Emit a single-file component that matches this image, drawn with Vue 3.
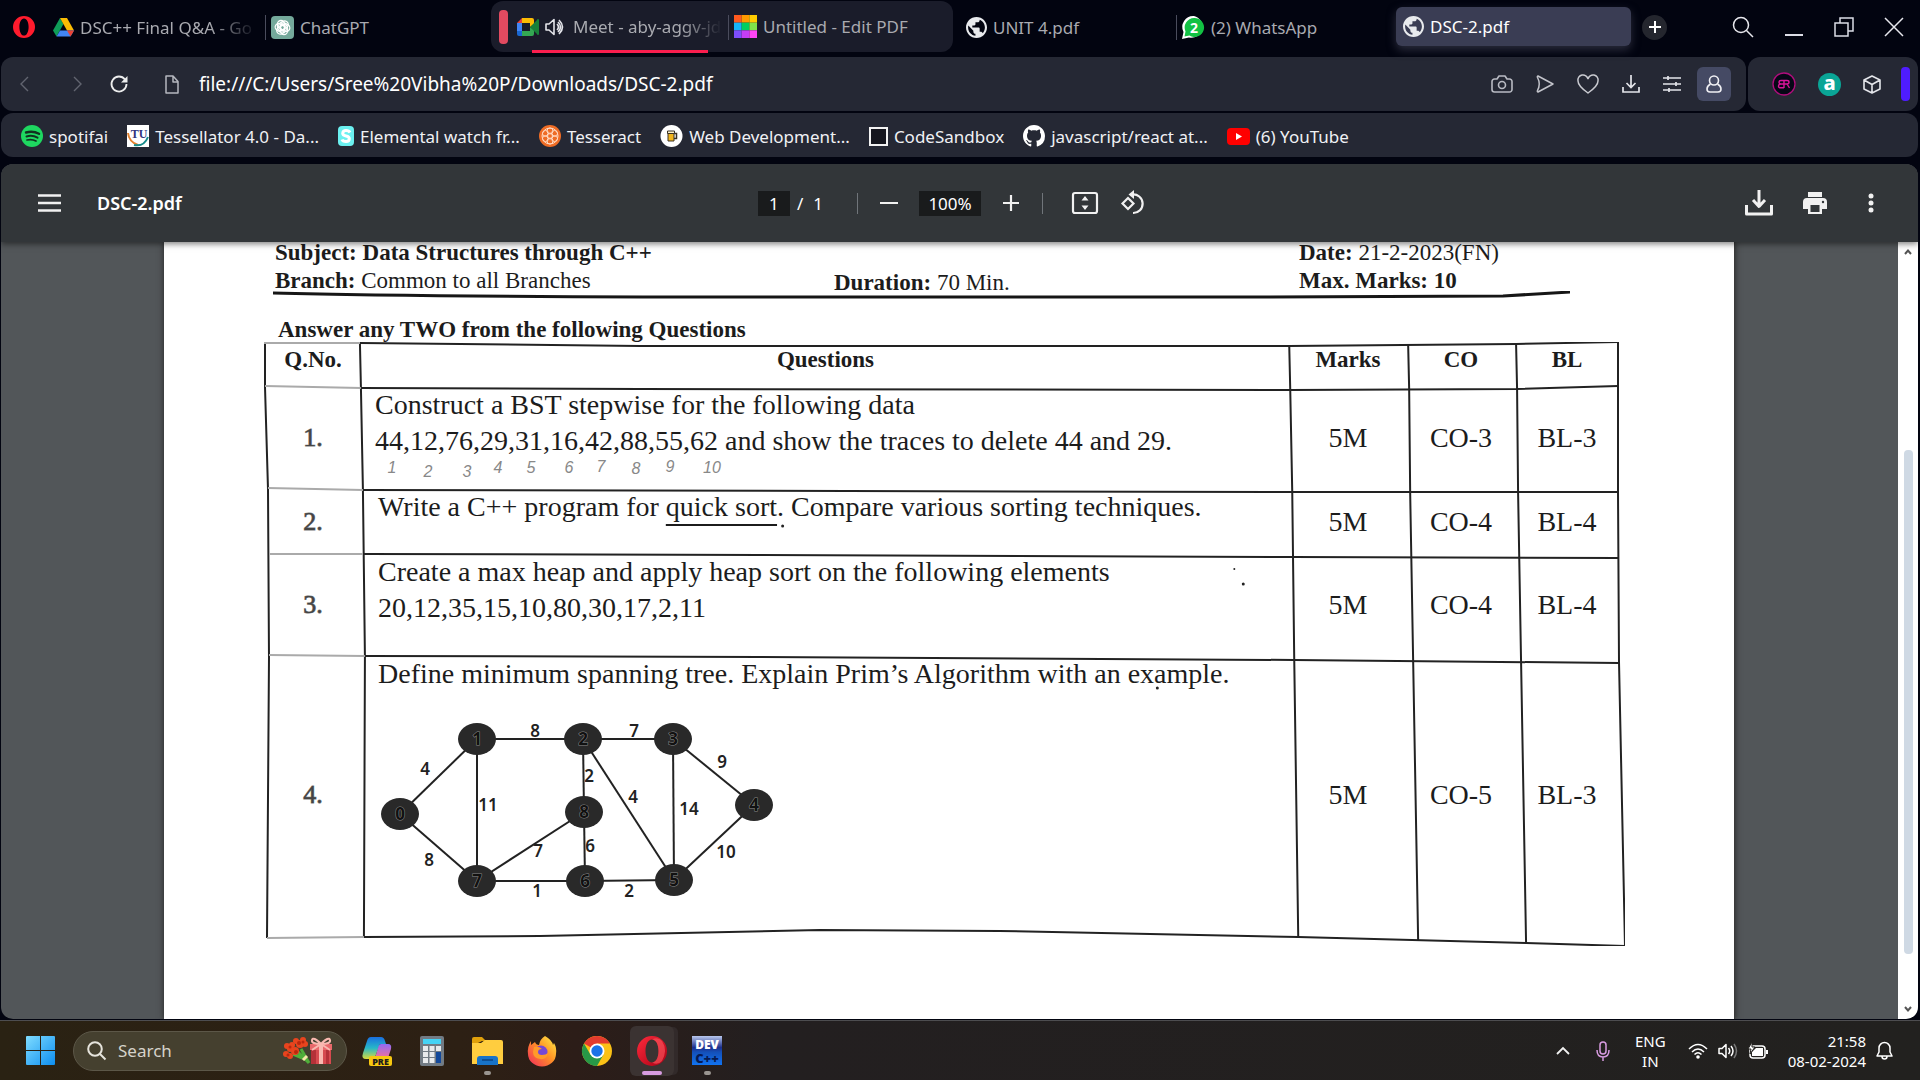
<script setup>
import { h, ref } from 'vue'

const icons = {
  opera: [22, 22, '0 0 22 22', '<path fill="#ff1b2d" fill-rule="evenodd" d="M11 0a11 11 0 1 0 0 22a11 11 0 0 0 0-22zM11 2.400c2.800 0 4.600 3.800 4.600 8.600s-1.800 8.600-4.600 8.600s-4.600-3.800-4.600-8.600s1.800-8.600 4.600-8.600z"/>'],
  drive: [21, 19, '0 0 21 19', '<path fill="#0f9d58" d="M7 0L0 12.500l3.500 6L10.500 6z"/><path fill="#fbbc04" d="M7 0h7l7 12.500h-7z"/><path fill="#4285f4" d="M3.500 18.500L7 12.500h14l-3.500 6z"/><path fill="#ea4335" d="M17.500 18.500l3.500-6h-7z"/>'],
  chatgpt: [23, 23, '0 0 23 23', '<rect width="23" height="23" rx="4" fill="#74a99b"/><g fill="none" stroke="#fff" stroke-width="1.300" transform="translate(11.500 11.500)"><rect x="-5" y="-7" width="7" height="10" rx="3.500"/><rect x="-5" y="-7" width="7" height="10" rx="3.500" transform="rotate(60)"/><rect x="-5" y="-7" width="7" height="10" rx="3.500" transform="rotate(120)"/><rect x="-5" y="-7" width="7" height="10" rx="3.500" transform="rotate(180)"/><rect x="-5" y="-7" width="7" height="10" rx="3.500" transform="rotate(240)"/><rect x="-5" y="-7" width="7" height="10" rx="3.500" transform="rotate(300)"/></g>'],
  meet: [22, 18, '0 0 22 18', '<path fill="#ea4335" d="M0 5L5 0v5z"/><path fill="#fbbc04" d="M5 0h10a2 2 0 0 1 2 2v4l-4 3V5H5z"/><path fill="#4285f4" d="M0 5h5v8H0z"/><path fill="#1967d2" d="M0 13h5v5H2a2 2 0 0 1-2-2z"/><path fill="#34a853" d="M5 13h8V9l4 3v4a2 2 0 0 1-2 2H5z"/><path fill="#188038" d="M13 9l7-7a1 1 0 0 1 2 0v14a1 1 0 0 1-2 0z"/>'],
  sound: [22, 18, '0 0 22 18', '<g fill="none" stroke="#e4e5ea" stroke-width="1.600"><path d="M1 6h3l5-4.500v15L4 12H1z" stroke-linejoin="round"/><path d="M12 6q3 3 0 6M14 2q7 7 0 14M13 4q5 5 0 10"/></g>'],
  rainbow: [23, 23, '0 0 24 24', '<path fill="#ff5a1f" d="M0 0h8v8H0z"/><path fill="#ff9a00" d="M8 0h8v8H8z"/><path fill="#ffcc00" d="M16 0h8v8h-8z"/><path fill="#16b5fb" d="M0 8h8v8H0z"/><path fill="#00cf60" d="M8 8h8v8H8z"/><path fill="#7fe24a" d="M16 8h8v8h-8z"/><path fill="#7d4dfb" d="M0 16h8v8H0z"/><path fill="#c53df5" d="M8 16h8v8H8z"/><path fill="#ff45f5" d="M16 16h8v8h-8z"/>'],
  globe: [21, 21, '2 2 20 20', '<path fill="#e8eaed" d="M12 2C6.480 2 2 6.480 2 12s4.480 10 10 10 10-4.480 10-10S17.520 2 12 2zm-1 17.930c-3.950-.49-7-3.850-7-7.930 0-.62.08-1.210.21-1.790L9 15v1c0 1.100.9 2 2 2v1.930zm6.900-2.540c-.26-.81-1-1.390-1.900-1.390h-1v-3c0-.55-.45-1-1-1H8v-2h2c.55 0 1-.45 1-1V7h2c1.100 0 2-.9 2-2v-.41c2.930 1.190 5 4.060 5 7.410 0 2.080-.8 3.970-2.100 5.390z"/>'],
  whatsapp: [23, 23, '0 0 23 23', '<path fill="#fff" d="M12 0A11 11 0 1 1 7 21.500L0 23l1.500-7A11 11 0 0 1 12 0z"/><path fill="#12c143" d="M12 2A9.500 9.500 0 1 1 7.500 19.500L2.500 20.500l1-5A9.500 9.500 0 0 1 12 2z"/><text x="12" y="17" text-anchor="middle" font-family="Open Sans, sans-serif" font-size="14" font-weight="700" fill="#fff">2</text>'],
  plus: [12, 12, '0 0 12 12', '<path stroke="#fff" stroke-width="2" d="M6 0v12M0 6h12"/>'],
  search: [22, 22, '0 0 22 22', '<g fill="none" stroke="#e8e8ee" stroke-width="1.500"><circle cx="9" cy="9" r="7.500"/><path d="M14.500 14.500L21 21"/></g>'],
  minimize: [20, 20, '0 0 20 20', '<path stroke="#dcdde6" stroke-width="2" d="M1 18h18"/>'],
  restore: [20, 20, '0 0 20 20', '<g fill="none" stroke="#dcdde6" stroke-width="1.500"><path d="M1 6h13v13H1zM6 6V1h13v13h-5"/></g>'],
  close: [20, 20, '0 0 20 20', '<path stroke="#e8e8ee" stroke-width="1.500" d="M1 1l18 18M19 1L1 19"/>'],
  back: [10, 14, '0 0 10 14', '<path fill="none" stroke="#626570" stroke-width="1.400" d="M8 0L1 7l7 7"/>'],
  forward: [10, 14, '0 0 10 14', '<path fill="none" stroke="#626570" stroke-width="1.400" d="M2 0l7 7-7 7"/>'],
  reload: [18, 18, '0 0 18 18', '<path fill="none" stroke="#eceded" stroke-width="1.800" d="M15 4.500A7.500 7.500 0 1 0 16.500 9"/><path fill="#eceded" d="M17.500 1v6.500H11z"/>'],
  doc: [16, 19, '0 0 16 19', '<path fill="none" stroke="#b5b7be" stroke-width="1.500" stroke-linejoin="round" d="M2 1h7l5 5.500V18H2zM9 1v6h5"/>'],
  camera: [22, 18, '0 0 22 18', '<g fill="none" stroke="#b9bbc3" stroke-width="1.600"><path stroke-linejoin="round" d="M3.500 4H6l2-3h6l2 3h2.500A2.500 2.500 0 0 1 21 6.500v8a2.500 2.500 0 0 1-2.500 2.500h-15A2.500 2.500 0 0 1 1 14.500v-8A2.500 2.500 0 0 1 3.500 4z"/><circle cx="11" cy="10" r="3.500"/></g>'],
  send: [18, 18, '0 0 18 18', '<path fill="none" stroke="#c3c4cb" stroke-width="1.500" stroke-linejoin="round" d="M2 1l15 8-15 8q-1 0-.500-1.500Q5 9 1.500 2.500Q1 1 2 1z"/>'],
  heart: [22, 19, '0 0 22 19', '<path fill="none" stroke="#c9cad0" stroke-width="1.500" d="M11 18Q1 11 1 6a5 5 0 0 1 10-2a5 5 0 0 1 10 2q0 5-10 12z"/>'],
  download: [18, 18, '0 0 18 18', '<path fill="none" stroke="#e4e5ea" stroke-width="1.700" d="M9 0v12M4.500 8L9 12.500 13.500 8M1 12v5h16v-5"/>'],
  sliders: [18, 16, '0 0 18 16', '<path stroke="#e4e5ea" stroke-width="1.700" d="M0 2h18M0 8h18M0 14h18M5 0v4M13 6v4M6 12v4"/>'],
  profile: [16, 18, '0 0 16 18', '<g fill="none" stroke="#f0f0f4" stroke-width="1.600"><circle cx="8" cy="5.500" r="4.500"/><path d="M4.500 9Q1 11 1 14q0 3 3 3h8q3 0 3-3q0-3-3.500-5"/></g>'],
  br: [24, 24, '0 0 24 24', '<circle cx="12" cy="12" r="11" fill="#060816" stroke="#b00d7c" stroke-width="1.300"/><path fill="none" stroke="#d9159a" stroke-width="1.400" d="M12 8v8M12 8.500H9q-2 0-2 1.700t2 1.800h3M9 12q-2.500 0-2.500 2T9 15.800h3M12 8.500h3q2 0 2 1.700T15 12h-3M15 12l2.500 4"/>'],
  alexa: [23, 23, '0 0 23 23', '<circle cx="11.500" cy="11.500" r="11.500" fill="#0aa596"/><text x="11.500" y="17" text-anchor="middle" font-family="Noto Sans, sans-serif" font-size="20" font-weight="800" fill="#fff">a</text>'],
  cube: [18, 19, '0 0 18 19', '<path fill="none" stroke="#e4e5ea" stroke-width="1.600" stroke-linejoin="round" d="M9 1l8 4v9l-8 4-8-4V5zM1 5l8 4.500L17 5M9 9.500V18"/>'],
  spotify: [22, 22, '0 0 22 22', '<circle cx="11" cy="11" r="11" fill="#1ed760"/><g fill="none" stroke="#123020" stroke-linecap="round"><path stroke-width="2.400" d="M5 7.500q7-2 13 1.300"/><path stroke-width="2" d="M5.500 11.500q6-1.700 11 1.200"/><path stroke-width="1.700" d="M6 15q5-1.200 9 1"/></g>'],
  tu: [22, 22, '0 0 22 22', '<path fill="#fff" d="M0 0h22v22H0z"/><path fill="none" stroke="#e2812f" stroke-width="2" d="M1 8q1 9 10 12"/><path fill="none" stroke="#158a8a" stroke-width="2" d="M7 20q10 2 14-8"/><text x="12" y="13" text-anchor="middle" font-family="Liberation Serif, serif" font-size="12" font-weight="700" fill="#31357e">TU</text>'],
  s: [16, 20, '0 0 16 20', '<rect width="16" height="20" rx="4" fill="#6bf0f0"/><path fill="none" stroke="#fff" stroke-width="3" d="M12 6.500q-1-2-4-2t-3.300 2.800q0 2 3.300 2.700t3.300 2.800q0 2.700-3.300 2.700t-4-2"/>'],
  tesseract: [22, 22, '0 0 22 22', '<circle cx="11" cy="11" r="11" fill="#ef6c25"/><g fill="none" stroke="#ffd9c0" stroke-width="1"><circle cx="11" cy="11" r="8"/><circle cx="11" cy="11" r="3"/><circle cx="11" cy="6" r="3"/><circle cx="11" cy="16" r="3"/><circle cx="6.500" cy="8.500" r="3"/><circle cx="15.500" cy="8.500" r="3"/><circle cx="6.500" cy="13.500" r="3"/><circle cx="15.500" cy="13.500" r="3"/></g>'],
  beer: [23, 22, '0 0 23 22', '<circle cx="11.500" cy="11" r="11" fill="#fff"/><path fill="none" stroke="#3a3226" stroke-width="1.500" d="M14 8.500h2.500v5H14"/><path fill="#f2b51d" stroke="#3a3226" d="M8 8h6v8H8z"/><path fill="#fff3c9" stroke="#3a3226" d="M7.500 6h7v2.500h-7z"/>'],
  sandbox: [19, 19, '0 0 19 19', '<path fill="#15161e" stroke="#f2f2f2" stroke-width="2" d="M1 1h17v17H1z"/>'],
  github: [22, 22, '0 0 16 16', '<path fill="#fff" d="M8 0C3.580 0 0 3.580 0 8c0 3.540 2.290 6.530 5.470 7.590.4.070.55-.17.55-.38 0-.19-.01-.82-.01-1.490-2.010.37-2.530-.49-2.690-.94-.09-.23-.48-.94-.82-1.130-.28-.15-.68-.52-.01-.53.63-.01 1.080.58 1.230.82.72 1.210 1.870.87 2.330.66.07-.52.28-.87.51-1.070-1.780-.2-3.640-.89-3.640-3.950 0-.87.31-1.590.82-2.150-.08-.2-.36-1.020.08-2.120 0 0 .67-.21 2.200.82.64-.18 1.320-.27 2-.27s1.360.09 2 .27c1.530-1.040 2.200-.82 2.200-.82.44 1.100.16 1.920.08 2.120.51.56.82 1.270.82 2.150 0 3.070-1.870 3.750-3.650 3.950.29.25.54.73.54 1.480 0 1.070-.01 1.930-.01 2.200 0 .21.15.46.55.38A8.010 8.010 0 0 0 16 8c0-4.420-3.580-8-8-8z"/>'],
  youtube: [23, 17, '0 0 23 17', '<rect width="23" height="17" rx="4" fill="#f00"/><path fill="#fff" d="M9 5l6 3.500L9 12z"/>'],
  menu: [23, 18, '0 0 23 18', '<path stroke="#f1f1f1" stroke-width="2.500" d="M0 1.500h23M0 9h23M0 16.500h23"/>'],
  zoomOut: [18, 18, '0 0 18 18', '<path stroke="#f1f1f1" stroke-width="2.200" d="M0 9h18"/>'],
  zoomIn: [18, 18, '0 0 18 18', '<path stroke="#f1f1f1" stroke-width="2.200" d="M1 9h16M9 1v16"/>'],
  fit: [26, 22, '0 0 26 22', '<rect x="1" y="1" width="24" height="20" rx="2" fill="none" stroke="#f1f1f1" stroke-width="2.200"/><path fill="#f1f1f1" d="M13 4l3.500 4.500h-7zM13 18l3.500-4.500h-7z"/>'],
  rotate: [26, 26, '0 0 26 26', '<g fill="none" stroke="#f1f1f1" stroke-width="2.200"><path d="M8 8l5.500 5.500L8 19l-5.500-5.500z"/><path d="M12 4.500a9.300 9.300 0 1 1 1 18.500"/></g><path fill="#f1f1f1" d="M14 0v9L8.500 4.500z"/>'],
  save: [28, 26, '0 0 28 26', '<path fill="none" stroke="#f1f1f1" stroke-width="3" stroke-linejoin="round" d="M14 0v16M8 10l6 6.500 6-6.500M1.500 15v9h25v-9"/>'],
  print: [24, 22, '0 0 24 22', '<path fill="#f1f1f1" d="M5 0h14v5H5zM4 6h16q4 0 4 4v7h-5v5H5v-5H0v-7q0-4 4-4z"/><path fill="#323639" d="M7.500 13h9v7h-9z"/><circle cx="20" cy="10" r="1.200" fill="#323639"/>'],
  dots: [6, 20, '0 0 6 20', '<g fill="#f1f1f1"><circle cx="3" cy="3" r="2.500"/><circle cx="3" cy="10" r="2.500"/><circle cx="3" cy="17" r="2.500"/></g>'],
  scrollUp: [8, 6, '0 0 8 6', '<path fill="none" stroke="#555" stroke-width="2" d="M1 5l3-3.500L7 5"/>'],
  scrollDown: [8, 6, '0 0 8 6', '<path fill="none" stroke="#555" stroke-width="2" d="M1 1l3 3.500L7 1"/>'],
  windows: [29, 29, '0 0 29 29', '<defs><linearGradient id="win" x1="0" y1="0" x2="1" y2="1"><stop offset="0" stop-color="#7fdcff"/><stop offset="1" stop-color="#0d8ef0"/></linearGradient></defs><path fill="url(#win)" d="M1 0h13v14H0V1a1 1 0 0 1 1-1zM15 0h13a1 1 0 0 1 1 1v13H15zM0 15h14v14H1a1 1 0 0 1-1-1zM15 15h14v13a1 1 0 0 1-1 1H15z"/>'],
  lens: [19, 19, '0 0 19 19', '<g fill="none" stroke="#e6e4dd" stroke-width="2"><circle cx="8" cy="8" r="6.800"/><path d="M13 13l5.500 5.500"/></g>'],
  gift: [50, 28, '0 0 50 28', '<g stroke="#4fae3a" stroke-width="3"><path d="M15 15l11 11M10 17l14 6M18 12l8 14"/></g><path stroke="#f4e9a8" stroke-width="3" d="M20 23l4-4"/><g fill="#e8441e"><circle cx="4" cy="9" r="3"/><circle cx="7" cy="12" r="3"/><circle cx="9" cy="8" r="3"/><circle cx="13" cy="4" r="3"/><circle cx="17" cy="7" r="4"/><circle cx="20" cy="3" r="3"/><circle cx="22" cy="7" r="3"/><circle cx="3" cy="17" r="3"/><circle cx="7" cy="19" r="3"/><circle cx="12" cy="14" r="4"/></g><g fill="#b9270e"><circle cx="7" cy="10" r="1.500"/><circle cx="16" cy="6" r="2"/><circle cx="20" cy="5" r="1.500"/><circle cx="5" cy="18" r="1.500"/><circle cx="13" cy="15" r="2"/></g><path fill="#d64a4f" d="M28 12h20v15H28z"/><path fill="#b43138" d="M28 12h5v15h-5zM43 12h3v15h-3z"/><path fill="#e9696b" d="M27 7h22v6H27z"/><path fill="#f9b9b0" d="M36 7h4v20h-4z"/><path fill="none" stroke="#f9b9b0" stroke-width="2" d="M38 7q-8-8-9-4t9 4q8-8 9-4t-9 4l-9 6M38 7l9 6"/>'],
  copilot: [30, 30, '0 0 30 30', '<defs><linearGradient id="ca" x1="0" y1="0" x2="0" y2="1"><stop offset="0" stop-color="#1a6fe0"/><stop offset=".5" stop-color="#27b7c8"/><stop offset="1" stop-color="#d8dc3c"/></linearGradient><linearGradient id="cb" x1="0" y1="0" x2="0" y2="1"><stop offset="0" stop-color="#8f6bf5"/><stop offset="1" stop-color="#f2709a"/></linearGradient></defs><path fill="url(#ca)" d="M9 1h10q3 0 4 4l1 3h-6l-5 13q-1 2-4 2H4q-5 0-3-6L5 5q1-4 4-4z"/><path fill="url(#cb)" d="M19 8h7q4 0 3 5l-3 9H13l3-10q1-4 3-4z"/><rect x="7" y="20" width="23" height="10" rx="2" fill="#f8c810"/><text x="18.500" y="28.500" text-anchor="middle" font-family="Open Sans, sans-serif" font-size="9" font-weight="800" fill="#1c1c1c">PRE</text>'],
  calc: [24, 30, '0 0 24 30', '<rect width="24" height="30" rx="2" fill="#727b84"/><path fill="#45d3f5" d="M3 3h18v5H3z"/><path fill="#e8eaec" d="M3 10h5v5H3zM9.500 10h5v5h-5zM16 10h5v5h-5zM3 16h5v5H3zM9.500 16h5v5h-5zM3 22h5v5H3zM9.500 22h5v5h-5z"/><path fill="#12489a" d="M16 16h5v11h-5z"/>'],
  folder: [31, 28, '0 0 31 28', '<path fill="#e0a00b" d="M0 2q0-2 2-2h8l4 4h-4L0 9z"/><path fill="#ffcd3f" d="M0 6h9l4-3h16q2 0 2 2v22H0z"/><path fill="#1873c8" d="M5 28v-6q0-3 3-3h15q3 0 3 3v6z"/><path stroke="#0e4f94" stroke-width="2" d="M10 23h11"/>'],
  firefox: [30, 30, '0 0 30 30', '<defs><linearGradient id="ff" x1="1" y1="0" x2="0" y2="1"><stop offset="0" stop-color="#fff14a"/><stop offset=".45" stop-color="#ff9425"/><stop offset="1" stop-color="#f1265e"/></linearGradient></defs><path fill="url(#ff)" d="M18 0q7 4 8 9l1-2q3 5 2 11a14 12.500 0 0 1-28 0Q0 11 4 5v4l4-3q1 3 4 3 1-6 6-9z"/><circle cx="14" cy="16" r="6.500" fill="#7548d6"/><path fill="#ff9a2a" d="M7 11q5-1 8 2-4 0-4 3t4 3 6-2q-1 7-8 6t-7-7z"/>'],
  chrome: [30, 30, '0 0 30 30', '<circle cx="15" cy="15" r="15" fill="#fbc116"/><path fill="#e33b2e" d="M15 15L2 7.500A15 15 0 0 1 28 7.500H15z"/><path fill="#279847" d="M2 7.500A15 15 0 0 0 15 30l6.500-11.500L15 15 8.500 18.700z"/><circle cx="15" cy="15" r="7.500" fill="#fff"/><circle cx="15" cy="15" r="5.700" fill="#1a73e8"/>'],
  operaBig: [30, 30, '0 0 30 30', '<defs><linearGradient id="op" x1="0" y1="0" x2="1" y2="1"><stop offset="0" stop-color="#ff2a3c"/><stop offset="1" stop-color="#a70014"/></linearGradient></defs><path fill="url(#op)" fill-rule="evenodd" d="M15 0a15 15 0 1 0 0 30a15 15 0 0 0 0-30zM15 3.500c4 0 6.500 5 6.500 11.500S19 26.500 15 26.500 8.500 21.500 8.500 15 11 3.500 15 3.500z"/><path fill="#ff5a60" fill-opacity=".6" d="M15 3.500q6-3 10 1.500q6 9 0 20q-4 4.500-10 1.500c4 0 6.500-5 6.500-11.500S19 3.500 15 3.500z"/>'],
  devcpp: [30, 29, '0 0 30 29', '<defs><linearGradient id="dv" x1="0" y1="0" x2="0" y2="1"><stop offset="0" stop-color="#b9c8ee"/><stop offset=".4" stop-color="#1c2f8c"/><stop offset=".55" stop-color="#1450b8"/><stop offset="1" stop-color="#1173f2"/></linearGradient></defs><path fill="url(#dv)" d="M0 0h30v29H0z"/><text x="15" y="13" text-anchor="middle" font-family="Open Sans, sans-serif" font-size="12" font-weight="800" fill="#fff">DEV</text><text x="15" y="27" text-anchor="middle" font-family="Open Sans, sans-serif" font-size="13" font-weight="800" fill="#061a52">C++</text>'],
  chevron: [14, 9, '0 0 14 9', '<path fill="none" stroke="#f2f2f2" stroke-width="1.800" d="M1 8l6-6 6 6"/>'],
  mic: [14, 20, '0 0 14 20', '<g fill="none" stroke="#d79be0" stroke-width="1.500"><rect x="4" y="1" width="6" height="12" rx="3"/><path d="M1 9q0 7 6 7t6-7M7 16v4"/></g>'],
  wifi: [20, 16, '0 0 20 16', '<g fill="none" stroke="#fff" stroke-width="1.500"><path d="M1 6q9-9 18 0M4 9q6-6 12 0M6.500 11.500q3.500-3.500 7 0"/></g><circle cx="10" cy="14" r="1.800" fill="#fff"/>'],
  volume: [20, 16, '0 0 20 16', '<g fill="none" stroke="#fff" stroke-width="1.500"><path stroke-linejoin="round" d="M1 5.500h3L8 1.500v13L4 10.500H1z"/><path d="M10.500 5q2.500 3 0 6M13 3q4 5 0 10"/><path stroke="#777" d="M16 1q5 7 0 14"/></g>'],
  battery: [20, 17, '0 0 20 17', '<rect x="2" y="4" width="15" height="12" rx="3" fill="none" stroke="#fff" stroke-width="1.500"/><path fill="#fff" d="M4 10l4-4h7v8H4zM18 8h2v4h-2z"/><path fill="#fff" stroke="#22211f" d="M4 0L0 7h3l-1 5 5-7H4z"/>'],
  bell: [17, 19, '0 0 17 19', '<path fill="none" stroke="#fff" stroke-width="1.500" stroke-linejoin="round" d="M1 15l2-4V7a5.500 5.500 0 0 1 11 0v4l2 4zM6 15.500q0 2.500 2.500 2.500T11 15.500"/>']
}

const Icon = (props) => {
  const [width, height, viewBox, innerHTML] = icons[props.name]
  return h('svg', { class: 'icon', width, height, viewBox, innerHTML, 'aria-hidden': 'true' })
}
Icon.props = ['name']

const address = ref('file:///C:/Users/Sree%20Vibha%20P/Downloads/DSC-2.pdf')
const pageNumber = ref('1')
const zoomLevel = ref('100%')

const bookmarks = [
  { icon: 'spotify', label: 'spotifai' },
  { icon: 'tu', label: 'Tessellator 4.0 - Da...' },
  { icon: 's', label: 'Elemental watch fr...' },
  { icon: 'tesseract', label: 'Tesseract' },
  { icon: 'beer', label: 'Web Development...' },
  { icon: 'sandbox', label: 'CodeSandbox' },
  { icon: 'github', label: 'javascript/react at...' },
  { icon: 'youtube', label: '(6) YouTube' }
]

// [digit, x, baseline] of the pencilled index under each number
const pencil = [
  ['1', 17, 14], ['2', 53, 18], ['3', 92, 18], ['4', 123, 14], ['5', 156, 14],
  ['6', 194, 14], ['7', 226, 13], ['8', 261, 15], ['9', 295, 13], ['10', 337, 14]
]

// [id, x, y]
const nodes = [
  [0, 24, 98], [1, 101, 23], [2, 207, 23], [3, 297, 23], [4, 378, 89],
  [5, 298, 164], [6, 209, 165], [7, 101, 165], [8, 208, 96]
]
const at = (id) => nodes[id]
// [from, to, weight, label x, label y]
const edges = [
  [0, 1, 4, 49, 53], [0, 7, 8, 53, 144], [1, 2, 8, 159, 15], [1, 7, 11, 112, 89],
  [2, 3, 7, 258, 15], [2, 8, 2, 213, 60], [2, 5, 4, 257, 81], [3, 5, 14, 313, 93],
  [3, 4, 9, 346, 46], [4, 5, 10, 350, 136], [8, 6, 6, 214, 130], [8, 7, 7, 162, 135],
  [7, 6, 1, 161, 175], [6, 5, 2, 253, 175]
]

const apps = [
  { icon: 'copilot', name: 'Copilot' },
  { icon: 'calc', name: 'Calculator' },
  { icon: 'folder', name: 'File Explorer', open: true },
  { icon: 'firefox', name: 'Firefox' },
  { icon: 'chrome', name: 'Chrome' },
  { icon: 'operaBig', name: 'Opera', active: true },
  { icon: 'devcpp', name: 'Dev-C++', open: true }
]
</script>

<template>
  <div class="desktop">
    <header class="tabs">
      <button class="opera" aria-label="Opera menu"><Icon name="opera" /></button>
      <button class="tab first"><Icon name="drive" /><span class="fade">DSC++ Final Q&amp;A - Go</span></button>
      <button class="tab divided"><Icon name="chatgpt" /><span>ChatGPT</span></button>
      <div class="group">
        <i class="island"></i>
        <button class="tab meet"><Icon name="meet" /><Icon name="sound" /><span class="fade">Meet - aby-aggv-jd</span></button>
        <button class="tab divided"><Icon name="rainbow" /><span>Untitled - Edit PDF</span></button>
      </div>
      <button class="tab unit"><Icon name="globe" /><span>UNIT 4.pdf</span></button>
      <button class="tab divided whats"><Icon name="whatsapp" /><span>(2) WhatsApp</span></button>
      <button class="tab current"><Icon name="globe" /><span>DSC-2.pdf</span></button>
      <button class="new-tab" aria-label="New tab"><Icon name="plus" /></button>
      <div class="window-controls">
        <button aria-label="Search tabs"><Icon name="search" /></button>
        <button aria-label="Minimize"><Icon name="minimize" /></button>
        <button aria-label="Restore"><Icon name="restore" /></button>
        <button aria-label="Close"><Icon name="close" /></button>
      </div>
    </header>

    <div class="bars">
      <div class="bar address">
        <button class="nav" aria-label="Back"><Icon name="back" /></button>
        <button class="nav" aria-label="Forward"><Icon name="forward" /></button>
        <button class="reload" aria-label="Reload"><Icon name="reload" /></button>
        <Icon name="doc" />
        <input v-model="address" class="url" aria-label="Address" spellcheck="false">
        <div class="actions">
          <button aria-label="Snapshot"><Icon name="camera" /></button>
          <button aria-label="Send"><Icon name="send" /></button>
          <button aria-label="Favourite"><Icon name="heart" /></button>
          <button aria-label="Downloads"><Icon name="download" /></button>
          <button aria-label="Easy setup"><Icon name="sliders" /></button>
          <button class="profile" aria-label="Profile"><Icon name="profile" /></button>
        </div>
      </div>
      <div class="bar extensions">
        <button aria-label="BR"><Icon name="br" /></button>
        <button aria-label="Alexa"><Icon name="alexa" /></button>
        <button aria-label="Extensions"><Icon name="cube" /></button>
        <i class="accent"></i>
      </div>
    </div>

    <nav class="bar bookmarks">
      <a v-for="b in bookmarks" :key="b.label" href="#"><Icon :name="b.icon" />{{ b.label }}</a>
    </nav>

    <main class="viewer">
      <div class="pdf-toolbar">
        <div class="side">
          <button aria-label="Menu"><Icon name="menu" /></button>
          <span class="title">DSC-2.pdf</span>
        </div>
        <div class="controls">
          <input v-model="pageNumber" class="page-no" aria-label="Page number">
          <span class="of">/</span><span>1</span>
          <i class="sep first-sep"></i>
          <button aria-label="Zoom out"><Icon name="zoomOut" /></button>
          <input v-model="zoomLevel" class="zoom" aria-label="Zoom level">
          <button aria-label="Zoom in"><Icon name="zoomIn" /></button>
          <i class="sep"></i>
          <button class="fit" aria-label="Fit to page"><Icon name="fit" /></button>
          <button aria-label="Rotate"><Icon name="rotate" /></button>
        </div>
        <div class="side right">
          <button aria-label="Download"><Icon name="save" /></button>
          <button aria-label="Print"><Icon name="print" /></button>
          <button aria-label="More"><Icon name="dots" /></button>
        </div>
      </div>

      <div class="scroll">
        <article class="paper">
          <div class="meta">
            <div><b>Subject: Data Structures through C++</b><br><b>Branch:</b> Common to all Branches</div>
            <div class="duration"><b>Duration:</b> 70 Min.</div>
            <div><b>Date:</b> 21-2-2023(FN)<br><b>Max. Marks: 10</b></div>
          </div>
          <svg class="rule" viewBox="0 0 1297 8" preserveAspectRatio="none" aria-hidden="true">
            <path d="M0 2Q120 5 370 6H970L1230 5 1297 1" fill="none" stroke="#161616" stroke-width="3" />
          </svg>
          <h1>Answer any TWO from the following Questions</h1>
          <div class="sheet">
            <svg class="ruling" viewBox="264 342 1362 604" preserveAspectRatio="none" aria-hidden="true">
              <g fill="none" stroke="#222" stroke-width="2">
                <path d="M265 343L265 387 268 489 269 657 267 938M360 343L361 388 363 490 365 657 364 937M1290 346L1291 390 1293 492 1295 660 1299 937M1409 345L1410 389 1411 492 1414 661 1419 941M1517 344L1518 389 1519 492 1522 662 1527 943M1619 342V492L1620 662 1626 946" />
                <path d="M360 343L640 346H1290L1517 344 1619 342M361 388L640 389 1291 390 1517 389 1619 386M363 490L1292 492H1619M363 554L760 555 1293 557 1619 558M365 656L760 657 1295 660 1620 663M364 937L540 936 820 930 1000 931 1299 937 1527 943 1626 946" />
                <path stroke="#aaa" d="M264 343H360M265 386L361 388M268 488L363 490M269 554H363M269 655L365 656M267 938L364 937" />
              </g>
              <g fill="#222"><circle cx="783" cy="526" r="1.500" /><circle cx="1235" cy="569" r="1" /><circle cx="1244" cy="584" r="1.500" /><circle cx="1158" cy="688" r="1.500" /></g>
            </svg>
            <table>
              <colgroup><col class="c-no"><col><col class="c-marks"><col class="c-co"><col class="c-bl"></colgroup>
              <thead>
                <tr><th>Q.No.</th><th>Questions</th><th>Marks</th><th>CO</th><th>BL</th></tr>
              </thead>
              <tbody>
                <tr class="r1">
                  <td class="no">1.</td>
                  <td class="q">
                    Construct a BST stepwise for the following data<br>
                    44,12,76,29,31,16,42,88,55,62 and show the traces to delete 44 and 29.
                    <svg class="pencil" width="360" height="22" viewBox="0 0 360 22">
                      <text v-for="[t, x, y] in pencil" :key="t" :x="x" :y="y" text-anchor="middle">{{ t }}</text>
                    </svg>
                  </td>
                  <td>5M</td><td>CO-3</td><td>BL-3</td>
                </tr>
                <tr class="r2">
                  <td class="no">2.</td>
                  <td class="q">Write a C++ program for <span class="marked">quick sort</span>. Compare various sorting techniques.</td>
                  <td>5M</td><td>CO-4</td><td>BL-4</td>
                </tr>
                <tr class="r3">
                  <td class="no">3.</td>
                  <td class="q">Create a max heap and apply heap sort on the following elements<br>20,12,35,15,10,80,30,17,2,11</td>
                  <td>5M</td><td>CO-4</td><td>BL-4</td>
                </tr>
                <tr class="r4">
                  <td class="no">4.</td>
                  <td class="q">
                    Define minimum spanning tree. Explain Prim’s Algorithm with an example.
                    <svg class="graph" width="404" height="190" viewBox="0 0 404 190">
                      <line v-for="[a, b] in edges" :key="a + '-' + b" :x1="at(a)[1]" :y1="at(a)[2]" :x2="at(b)[1]" :y2="at(b)[2]" />
                      <text v-for="[a, b, w, x, y] in edges" :key="a + '~' + b" class="weight" :x="x" :y="y + 6">{{ w }}</text>
                      <g v-for="[id, x, y] in nodes" :key="id">
                        <ellipse :cx="x" :cy="y" rx="19" ry="16" />
                        <text class="node" :x="x" :y="y + 6">{{ id }}</text>
                      </g>
                    </svg>
                  </td>
                  <td>5M</td><td>CO-5</td><td>BL-3</td>
                </tr>
              </tbody>
            </table>
          </div>
        </article>
        <div class="scrollbar"><Icon name="scrollUp" /><i class="thumb"></i><Icon name="scrollDown" /></div>
      </div>
    </main>

    <footer class="taskbar">
      <button class="start" aria-label="Start"><Icon name="windows" /></button>
      <label class="search"><Icon name="lens" /><input type="text" placeholder="Search" aria-label="Search"><Icon name="gift" /></label>
      <div class="apps">
        <button v-for="a in apps" :key="a.name" :class="{ open: a.open, active: a.active }" :aria-label="a.name"><Icon :name="a.icon" /></button>
      </div>
      <div class="tray">
        <button aria-label="Hidden icons"><Icon name="chevron" /></button>
        <button class="mic" aria-label="Microphone"><Icon name="mic" /></button>
        <span class="lang">ENG<br>IN</span>
        <Icon name="wifi" /><Icon name="volume" /><Icon name="battery" />
        <span class="clock">21:58<br>08-02-2024</span>
        <button aria-label="Notifications"><Icon name="bell" /></button>
      </div>
    </footer>
  </div>
</template>

<style>
body { margin: 0; background: #020410; }
</style>

<style scoped>
* { box-sizing: border-box; }
button, input { font: inherit; color: inherit; background: none; border: 0; padding: 0; margin: 0; outline: 0; }
button { display: flex; align-items: center; justify-content: center; }
.icon { flex: none; overflow: visible; }
.desktop { display: flex; flex-direction: column; height: 100vh; overflow: hidden; background: #020410; color: #fff; font-family: "Noto Sans", "Open Sans", sans-serif; font-size: 17px; }

.tabs { display: flex; align-items: center; height: 57px; padding-bottom: 3px; flex: none; color: #a9aab0; }
.opera { width: 47px; height: 52px; }
.tab { flex: 0 1 220px; min-width: 0; height: 52px; justify-content: flex-start; gap: 6px; padding-left: 6px; white-space: nowrap; position: relative; }
.tab.first { flex-basis: 218px; }
.fade { flex: 1; min-width: 0; text-align: left; mask-image: linear-gradient(90deg, #000 70%, transparent 96%); }
.divided::before { content: ""; position: absolute; left: 0; top: 14px; height: 25px; width: 1px; background: #4a4c5c; }
.tabs > .divided { flex-basis: 226px; }
.tabs > .whats { flex-basis: 220px; }
.group { display: flex; align-items: center; width: 462px; height: 51px; align-self: flex-start; margin-top: 1px; border-radius: 12px; background: #1a1c2a; }
.island { width: 9px; height: 34px; margin-left: 8px; border-radius: 4px; background: #e24a60; flex: none; }
.meet { padding-left: 9px; }
.meet::after { content: ""; position: absolute; left: 24px; right: 20px; bottom: 0; height: 3px; background: #fa1e4e; }
.unit { margin-left: 4px; padding-left: 9px; flex-basis: 219px; }
.tab.current { flex-basis: 235px; height: 39px; border-radius: 6px; background: #3a3d54; color: #fff; padding-left: 7px; align-self: flex-start; margin-top: 7px; box-shadow: 0 4px 10px #2a2c3c; }
.new-tab { width: 25px; height: 25px; border-radius: 50%; background: #24262e; margin-left: 11px; }
.window-controls { margin-left: auto; display: flex; gap: 30px; padding-right: 16px; }

.bar { background: #252834; border-radius: 12px; display: flex; align-items: center; }
.bars { display: flex; gap: 2px; height: 54px; margin: 0 2px 2px 1px; flex: none; }
.address { flex: 1; padding: 0 15px 0 19px; }
.nav { width: 10px; margin-right: 42px; }
.reload { width: 18px; margin-left: -14px; margin-right: 36px; }
.url { flex: 1; min-width: 0; margin-left: 19px; font-size: 19px; }
.actions { display: flex; align-items: center; gap: 23px; }
.profile { width: 34px; height: 34px; border-radius: 6px; background: #454a64; margin-left: -7px; }
.extensions { width: 170px; gap: 22px; padding-left: 24px; }
.accent { width: 9px; height: 34px; border-radius: 4px; background: #4f1cff; margin-left: -2px; }
.bookmarks { height: 44px; margin: 0 2px 7px 1px; padding: 2px 0 0 20px; gap: 19px; flex: none; }
.bookmarks a { display: flex; align-items: center; gap: 6px; color: #f0f1f4; text-decoration: none; white-space: nowrap; }

.viewer { flex: 1; min-height: 0; display: flex; flex-direction: column; margin: 0 2px 1px 1px; border-radius: 12px; overflow: hidden; background: #525659; }
.pdf-toolbar { display: flex; align-items: center; height: 78px; flex: none; background: #323639; padding: 0 44px 0 37px; box-shadow: 0 2px 6px rgba(0, 0, 0, .5); position: relative; }
.side { flex: 1; display: flex; align-items: center; gap: 36px; }
.right { justify-content: flex-end; gap: 30px; }
.right button:last-child { margin-left: 11px; }
.title { font-size: 18px; font-weight: 600; }
.controls { display: flex; align-items: center; padding-right: 8px; }
.page-no, .zoom { height: 25px; text-align: center; background: #191b1c; }
.page-no { width: 32px; }
.zoom { width: 62px; margin: 0 21px; }
.of { margin: 0 10px 0 7px; }
.sep { width: 1px; height: 21px; background: #70757a; margin: 0 22px; }
.first-sep { margin: 0 22px 0 34px; }
.fit { margin: 0 22px 0 7px; }
.scroll { flex: 1; min-height: 0; display: flex; overflow: hidden; }
.paper { width: 1571px; margin: 0 auto; background: #fff; color: #1c1c1c; font-family: "Liberation Serif", serif; padding: 0 109px 0 100px; box-shadow: 0 0 6px #222; border-right: 1px solid #3a3a3a; }
.meta { display: grid; grid-template-columns: 559px 465px 1fr; padding-left: 11px; margin-top: -3px; font-size: 23px; line-height: 28px; }
.duration { padding-top: 30px; }
.rule { display: block; width: 1297px; height: 8px; margin: -6px 0 0 9px; }
h1 { font-size: 23px; line-height: 28px; margin: 17px 0 0 14px; }
.sheet { position: relative; margin-top: -2px; }
.ruling { position: absolute; inset: 0; width: 100%; height: 100%; }
table { position: relative; width: 100%; table-layout: fixed; border-collapse: collapse; font-size: 28px; line-height: 36px; }
.c-no { width: 98px; }
.c-marks { width: 118px; }
.c-co { width: 108px; }
.c-bl { width: 110px; }
th { font-size: 23px; height: 45px; line-height: 36px; padding: 0; vertical-align: top; }
td { padding: 0; text-align: center; vertical-align: middle; }
td:last-child, th:last-child { padding-right: 6px; }
.no { color: #444; font-size: 26px; -webkit-text-stroke: 1px #777; paint-order: stroke; }
td.q { text-align: left; vertical-align: top; padding-left: 16px; white-space: nowrap; }
.r1 .q { padding-left: 13px; }
.r1 { height: 102px; }
.r2 { height: 65px; }
.r3 { height: 102px; }
.r4 { height: 290px; }
.r4 td { padding-bottom: 12px; }
.pencil { display: block; font-family: "Liberation Sans", sans-serif; font-style: italic; font-size: 16px; fill: #888; }
.marked { text-decoration: underline 2px; text-underline-offset: 8px; }
.graph { display: block; margin: 24px 0 0 -2px; }
.graph line { stroke: #222; stroke-width: 2; }
.graph ellipse { fill: #292929; }
.graph text { font-family: "Noto Sans", sans-serif; font-size: 17px; font-weight: 600; text-anchor: middle; fill: #222; }
.graph .node { font-weight: 700; fill: #111; stroke: #888; stroke-width: 1; paint-order: stroke; }
.scrollbar { width: 20px; background: #fff; display: flex; flex-direction: column; align-items: center; padding: 7px 0; }
.thumb { width: 9px; flex: 0 0 66%; margin: auto 0 52px; border-radius: 4px; background: #cfd9e4; }

.taskbar { display: flex; align-items: center; height: 60px; flex: none; border-top: 1px solid #4d4d50; background: linear-gradient(90deg, #2a2213, #2d2014 24%, #2c1d18 30%, #231f20 40%, #22211f); }
.start { margin: 0 18px 0 26px; }
.search { display: flex; align-items: center; width: 274px; height: 40px; border-radius: 20px; background: #45402f; border: 1px solid #5c5748; padding: 0 13px 0 13px; }
.search input { flex: 1; min-width: 0; margin-left: 12px; }
.search input::placeholder { color: #d6d3cb; opacity: 1; }
.apps { display: flex; gap: 11px; margin-left: 8px; }
.apps button { width: 44px; height: 50px; position: relative; border-radius: 6px; }
.apps .active { background: #3b3332; box-shadow: 5px 0 0 -1px #322a2a; }
.open::after, .active::after { content: ""; position: absolute; bottom: 1px; width: 7px; height: 4px; border-radius: 2px; background: #9a9590; }
.active::after { width: 20px; background: #d79be0; }
.tray { margin-left: auto; display: flex; align-items: center; gap: 10px; padding-right: 27px; font-size: 15px; line-height: 20px; }
.mic { margin: 0 15px 0 16px; }
.lang { text-align: center; margin-right: 12px; }
.clock { text-align: right; margin-left: 10px; }
</style>
